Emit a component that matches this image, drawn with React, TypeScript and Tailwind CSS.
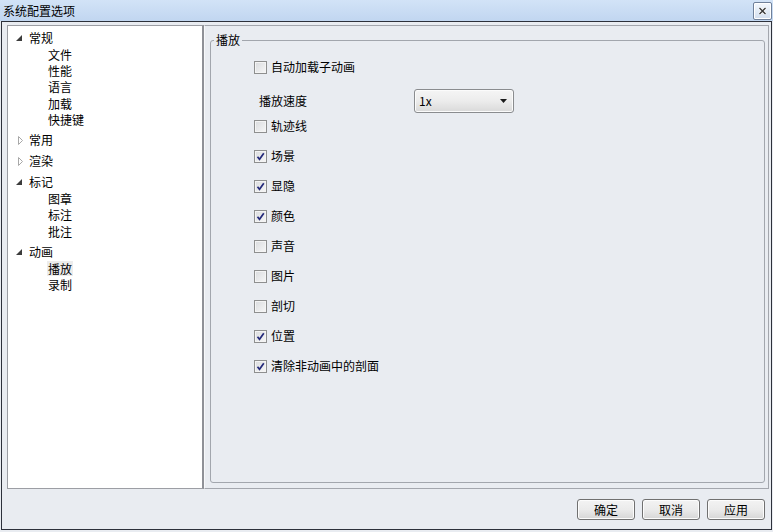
import React from "react";

const FONT = { fontFamily: '"Noto Sans CJK SC", "Noto Sans", sans-serif' };

function ExpandedArrow() {
  return (
    <svg width="6" height="6" viewBox="0 0 6 6" className="block">
      <polygon points="6,0 6,6 0,6" fill="#3c3c3c" />
    </svg>
  );
}

function CollapsedArrow() {
  return (
    <svg width="6" height="9" viewBox="0 0 6 9" className="block ml-[2px]">
      <polygon points="0.5,0.5 4.5,4.5 0.5,8.5" fill="#ffffff" stroke="#a8a8a8" strokeWidth="1" />
    </svg>
  );
}

type Group = { title: string; expanded: boolean; children: string[] };

const groups: Group[] = [
  { title: "常规", expanded: true, children: ["文件", "性能", "语言", "加载", "快捷键"] },
  { title: "常用", expanded: false, children: [] },
  { title: "渲染", expanded: false, children: [] },
  { title: "标记", expanded: true, children: ["图章", "标注", "批注"] },
  { title: "动画", expanded: true, children: ["播放", "录制"] },
];

function Checkbox({ checked }: { checked: boolean }) {
  return (
    <div className="w-[13px] h-[13px] border border-[#8e8f8f] bg-gradient-to-br from-[#d9dbde] to-[#f7f7f7] flex items-center justify-center shrink-0">
      <div className="w-[11px] h-[11px] border border-[#f4f4f4] flex items-center justify-center">
        {checked && (
          <svg width="9" height="9" viewBox="0 0 9 9" className="block">
            <path d="M1.5 4.8 L3.5 7.3 L7.8 1.2" fill="none" stroke="#23297a" strokeWidth="1.7" strokeLinejoin="miter" />
          </svg>
        )}
      </div>
    </div>
  );
}

function CheckRow({ label, checked, mt }: { label: string; checked: boolean; mt: string }) {
  return (
    <div className={`flex items-center h-[16px] gap-[4px] ${mt}`}>
      <Checkbox checked={checked} />
      <span className="text-[12px] leading-[16px] text-black">{label}</span>
    </div>
  );
}

function Button({ label }: { label: string }) {
  return (
    <div className="w-[58px] h-[21px] rounded-[3px] border border-[#707070] bg-gradient-to-b from-[#f3f3f3] via-[#ebebeb] to-[#d6d6d6] flex items-center justify-center shadow-[inset_0_0_0_1px_#fcfcfc]">
      <span className="text-[12px] leading-[16px] text-black">{label}</span>
    </div>
  );
}

export default function App() {
  const checks: [string, boolean][] = [
    ["场景", true],
    ["显隐", true],
    ["颜色", true],
    ["声音", false],
    ["图片", false],
    ["剖切", false],
    ["位置", true],
    ["清除非动画中的剖面", true],
  ];

  return (
    <div className="w-[773px] h-[532px] flex flex-col bg-[#e9ecf1] overflow-hidden" style={FONT}>
      {/* Title bar */}
      <div className="h-[21px] flex items-center justify-between bg-gradient-to-b from-[#d2e3f7] to-[#c1d6f0] pl-[3px] pr-[1px]">
        <span className="text-[12px] leading-[16px] text-black">系统配置选项</span>
        <div className="w-[19px] h-[18px] mt-[1px] rounded-[2px] border border-[#6f809a] bg-gradient-to-b from-[#f4f8fd] to-[#d3dfef] flex items-center justify-center shadow-[inset_0_0_0_1px_#ffffff]">
          <svg width="9" height="8" viewBox="0 0 9 8" className="block">
            <path d="M1.5 1 L7.5 7 M7.5 1 L1.5 7" stroke="#ffffff" strokeWidth="3" />
            <path d="M1.5 1 L7.5 7 M7.5 1 L1.5 7" stroke="#3a3a3a" strokeWidth="1.4" />
          </svg>
        </div>
      </div>

      {/* Frame */}
      <div className="ml-[1px] w-[771px] h-[509px] border border-[#2d313b] flex flex-col bg-[#e9ecf1]">
        <div className="flex mt-[3px] ml-[5px] mr-[2px] h-[464px]">
          {/* Tree */}
          <div className="w-[197px] h-full bg-white border border-[#9c9ea4] border-r-2 border-r-[#8f9197] pt-[4px]">
            <div className="flex flex-col gap-[5px]">
              {groups.map((g) => (
                <div key={g.title} className="flex flex-col">
                  <div className="h-[16px] flex items-center pl-[8px]">
                    <div className="w-[13px] flex items-center">
                      {g.expanded ? <ExpandedArrow /> : <CollapsedArrow />}
                    </div>
                    <span className="text-[12px] leading-[16px] text-black">{g.title}</span>
                  </div>
                  {g.children.map((c) => (
                    <div key={c} className="h-[16.3px] flex items-center pl-[40px]">
                      <span
                        className={`text-[12px] leading-[15px] text-black ${
                          c === "播放" ? "bg-[#ececec] px-[1px] -ml-[1px]" : ""
                        }`}
                      >
                        {c}
                      </span>
                    </div>
                  ))}
                </div>
              ))}
            </div>
          </div>

          {/* Right panel */}
          <div className="flex-1 h-full border border-[#a3a6ad] border-l-[#f7f8fa] flex flex-col bg-[#e9ecf1]">
            <fieldset className="mt-[6px] ml-[5px] mr-[3px] mb-[5px] flex-1 border border-[#a2a6ad] rounded-[3px] pl-[3px] min-w-0">
              <legend className="px-[2px] text-[12px] leading-[16px] text-black">播放</legend>
              <div className="pl-[40px] pt-[11px] flex flex-col">
                <CheckRow label="自动加载子动画" checked={false} mt="" />
                <div className="mt-[14px] h-[24px] flex items-center">
                  <span className="pl-[5px] w-[160px] text-[12px] leading-[16px] text-black">播放速度</span>
                  <div className="w-[100px] h-[24px] rounded-[3px] border border-[#8a8c8f] bg-gradient-to-b from-[#f5f5f5] via-[#ececec] to-[#d9d9d9] flex items-center justify-between pl-[4px] pr-[6px] shadow-[inset_0_0_0_1px_#fbfbfb]">
                    <span className="text-[12px] leading-[16px] text-black">1x</span>
                    <svg width="7" height="4" viewBox="0 0 7 4" className="block">
                      <polygon points="0,0 7,0 3.5,4" fill="#1a1a1a" />
                    </svg>
                  </div>
                </div>
                <CheckRow label="轨迹线" checked={false} mt="mt-[5px]" />
                {checks.map(([l, c]) => (
                  <CheckRow key={l} label={l} checked={c} mt="mt-[14px]" />
                ))}
              </div>
            </fieldset>
          </div>
        </div>

        {/* Buttons */}
        <div className="flex justify-end gap-[7px] mt-[10px] mr-[6px]">
          <Button label="确定" />
          <Button label="取消" />
          <Button label="应用" />
        </div>
      </div>
    </div>
  );
}
